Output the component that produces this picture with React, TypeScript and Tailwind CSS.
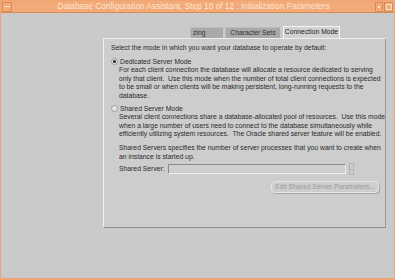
const font = { fontFamily: '"Liberation Sans", Arial, sans-serif' };

const Radio = ({ checked }: { checked: boolean }) => (
  <span className="inline-flex w-[7px] h-[7px] rounded-full bg-[#e4e4e4] border border-[#9a9a9a] items-center justify-center mr-[2px]">
    {checked && <span className="w-[3px] h-[3px] rounded-full bg-[#222]" />}
  </span>
);

const App: React.FC = () => {
  return (
    <div
      className="w-[395px] h-[280px] bg-[#f0a472] p-[1px] pb-[2px] flex flex-col text-[#2a2a2a]"
      style={font}
    >
      {/* title bar */}
      <div className="h-[12px] flex items-center bg-[#f2aa78] border-b border-[#d98a55]">
        <div className="w-[10px] h-[10px] ml-[1px] border border-[#d98a55] flex items-center justify-center">
          <div className="w-[6px] h-[1px] bg-[#fbe0c8]" />
        </div>
        <div className="flex-1 text-center text-[8.3px] leading-none text-[#fde6d2] whitespace-nowrap">
          Database Configuration Assistant, Step 10 of 12 : Initialization Parameters
        </div>
        <div className="w-[8px] h-[10px] border border-[#d98a55] flex items-center justify-center">
          <div className="w-[2px] h-[2px] bg-[#fbe0c8]" />
        </div>
        <div className="w-[9px] h-[10px] border border-[#d98a55] ml-[1px] mr-[1px] flex items-center justify-center">
          <div className="w-[6px] h-[6px] border border-[#fbe0c8]" />
        </div>
      </div>

      {/* body */}
      <div className="flex-1 bg-[#cacaca] flex flex-col pl-[102px] pr-[8px] whitespace-nowrap">
        <div className="flex items-end h-[25px] pl-[87px] text-[6.8px] leading-none">
          <div className="w-[33px] h-[11px] bg-[#a9a9a9] border-t border-l border-[#bdbdbd] flex items-center pl-[2px] text-[#333]">
            zing
          </div>
          <div className="w-[55px] h-[11px] ml-[2px] bg-[#a9a9a9] border-t border-l border-[#bdbdbd] flex items-center justify-center text-[#333]">
            Character Sets
          </div>
          <div className="w-[57px] h-[12px] ml-[3px] bg-[#d2d2d2] border-t border-l border-r border-[#f4f4f4] flex items-center justify-center text-[#222]">
            Connection Mode
          </div>
        </div>

        <div className="w-[283px] h-[190px] bg-[#cdcdcd] border border-t-[#eeeeee] border-l-[#eeeeee] border-b-[#8c8c8c] border-r-[#9a9a9a] pl-[7px] pr-[4px] pt-[5px] text-[6.8px] leading-[8.6px]">
          <p>Select the mode in which you want your database to operate by default:</p>

          <div className="mt-[5px] flex items-center">
            <Radio checked />
            <span>Dedicated Server Mode</span>
          </div>
          <p className="pl-[8px]">
            For each client connection the database will allocate a resource dedicated to serving
            <br />
            only that client.&nbsp; Use this mode when the number of total client connections is expected
            <br />
            to be small or when clients will be making persistent, long-running requests to the
            <br />
            database.
          </p>

          <div className="mt-[4px] flex items-center">
            <Radio checked={false} />
            <span>Shared Server Mode</span>
          </div>
          <p className="pl-[8px]">
            Several client connections share a database-allocated pool of resources.&nbsp; Use this mode
            <br />
            when a large number of users need to connect to the database simultaneously while
            <br />
            efficiently utilizing system resources.&nbsp; The Oracle shared server feature will be enabled.
          </p>

          <p className="pl-[8px] mt-[5px]">
            Shared Servers specifies the number of server processes that you want to create when
            <br />
            an instance is started up.
          </p>
          <div className="pl-[8px] mt-[2px] flex items-center">
            <span className="mr-[3px]">Shared Server:</span>
            <div className="w-[178px] h-[10px] border border-t-[#8a8a8a] border-l-[#8a8a8a] border-b-[#eeeeee] border-r-[#eeeeee] bg-[#cfcfcf]" />
            <div className="ml-[3px] w-[5px] h-[12px] flex flex-col border border-[#b5b5b5]">
              <div className="flex-1 border-b border-[#b5b5b5]" />
              <div className="flex-1" />
            </div>
          </div>
          <div className="flex justify-end pr-[2px] mt-[6px]">
            <div className="w-[108px] h-[12px] rounded-[4px] border border-[#e6e6e6] shadow-[1px_1px_0_#a5a5a5] flex items-center justify-center text-[#9c9c9c]">
              Edit Shared Server Parameters...
            </div>
          </div>
        </div>
      </div>
    </div>
  );
};

export default App;
